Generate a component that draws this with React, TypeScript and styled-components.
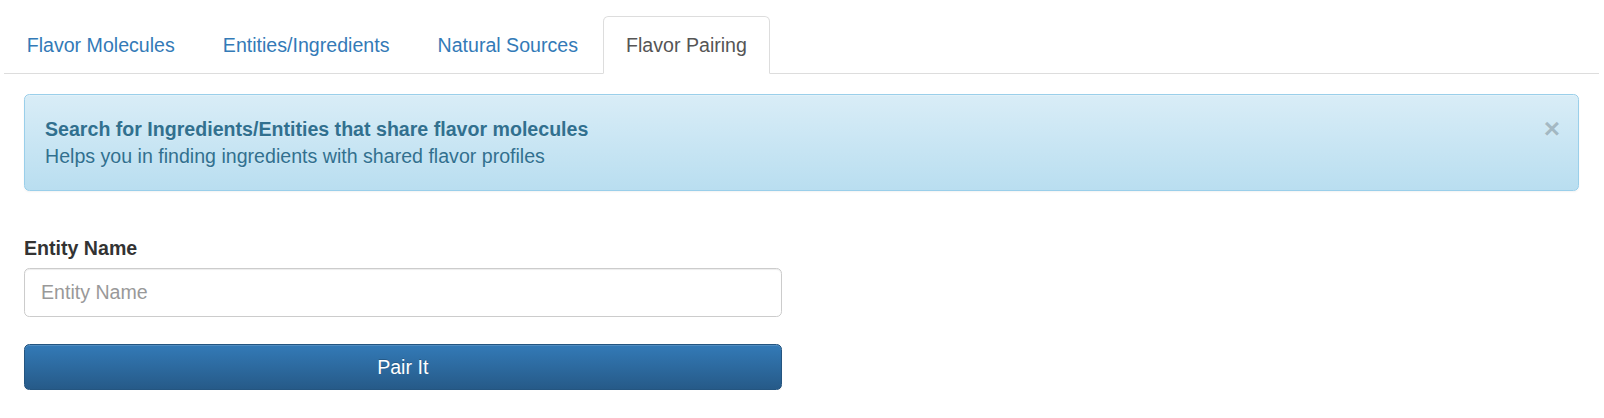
import React from 'react';
import styled, {createGlobalStyle} from "styled-components";

const GlobalStyle = createGlobalStyle`
  * {
    box-sizing: border-box;
  }
  body {
    margin: 0;
    background: #fff;
    font-family: "Liberation Sans", Arial, sans-serif;
    font-size: 19.6px;
    line-height: 26.67px;
    color: #333;
  }
`

const tabs = ["Flavor Molecules", "Entities/Ingredients", "Natural Sources", "Flavor Pairing"];

export default function App() {
    return (
        <>
            <GlobalStyle/>
            <Page>
                <TabList>
                    {tabs.map((t, i) => (
                        <TabItem key={t}>
                            <TabLink $active={i === 3}>{t}</TabLink>
                        </TabItem>
                    ))}
                </TabList>
                <TabContent>
                    <Alert>
                        <CloseButton type="button">&times;</CloseButton>
                        <AlertTitle>Search for Ingredients/Entities that share flavor molecules</AlertTitle>
                        <div>Helps you in finding ingredients with shared flavor profiles</div>
                    </Alert>
                    <Form>
                        <FormGroup>
                            <Label htmlFor="entity">Entity Name</Label>
                            <Input id="entity" placeholder="Entity Name"/>
                        </FormGroup>
                        <Button type="button">Pair It</Button>
                    </Form>
                </TabContent>
            </Page>
        </>
    );
}

const Page = styled.div`
  padding: 16px 5px 0 4px;
`
const TabList = styled.ul`
  display: flex;
  list-style: none;
  margin: 0;
  padding: 0;
  border-bottom: 1.33px solid #ddd;
`
const TabItem = styled.li`
  margin-right: 2.67px;
  margin-bottom: -1.33px;
`
const TabLink = styled.a<{ $active?: boolean }>`
  display: block;
  padding: 14.8px 21.7px;
  line-height: 26.67px;
  border: 1.33px solid ${p => p.$active ? "#ddd" : "transparent"};
  border-bottom-color: transparent;
  border-radius: 5.33px 5.33px 0 0;
  background: ${p => p.$active ? "#fff" : "transparent"};
  color: ${p => p.$active ? "#555" : "#337ab7"};
  text-decoration: none;
  cursor: pointer;
`
const TabContent = styled.div`
  padding: 20px 20px 0;
`
const Alert = styled.div`
  position: relative;
  padding: 21px 46.67px 21px 20px;
  margin-bottom: 26.67px;
  border: 1.33px solid #9acfea;
  border-radius: 5.33px;
  color: #31708f;
  background-image: linear-gradient(to bottom, #d9edf7 0, #b9def0 100%);
  box-shadow: inset 0 1px 0 rgba(255, 255, 255, .25), 0 1px 2px rgba(0, 0, 0, .05);
  text-shadow: 0 1px 0 rgba(255, 255, 255, .2);
`
const AlertTitle = styled.strong`
  display: block;
  font-weight: 700;
`
const CloseButton = styled.button`
  position: absolute;
  top: 20px;
  right: 18px;
  padding: 0;
  border: 0;
  background: transparent;
  font-family: "Liberation Sans", Arial, sans-serif;
  font-size: 28px;
  font-weight: 700;
  line-height: 1;
  color: #000;
  opacity: .2;
  text-shadow: 0 1px 0 #fff;
  cursor: pointer;
`
const Form = styled.form`
  width: calc(50% - 20px);
  padding-top: 17px;
`
const FormGroup = styled.div`
  margin-bottom: 27px;
`
const Label = styled.label`
  display: inline-block;
  margin-bottom: 6.67px;
  font-weight: 700;
`
const Input = styled.input`
  display: block;
  width: 100%;
  height: 49px;
  padding: 8px 16px;
  font-family: "Liberation Sans", Arial, sans-serif;
  font-size: 19.6px;
  color: #555;
  background: #fff;
  border: 1.33px solid #ccc;
  border-radius: 5.33px;
  box-shadow: inset 0 1px 1px rgba(0, 0, 0, .075);

  &::placeholder {
    color: #999;
  }
`
const Button = styled.button`
  display: block;
  width: 100%;
  height: 45.33px;
  padding: 8px 16px;
  font-family: "Liberation Sans", Arial, sans-serif;
  font-size: 19.6px;
  line-height: 26.67px;
  color: #fff;
  border: 1.33px solid #245580;
  border-radius: 5.33px;
  background-image: linear-gradient(to bottom, #337ab7 0, #265a88 100%);
  text-shadow: 0 -1px 0 rgba(0, 0, 0, .2);
  box-shadow: inset 0 1px 0 rgba(255, 255, 255, .15), 0 1px 1px rgba(0, 0, 0, .075);
  cursor: pointer;
`
